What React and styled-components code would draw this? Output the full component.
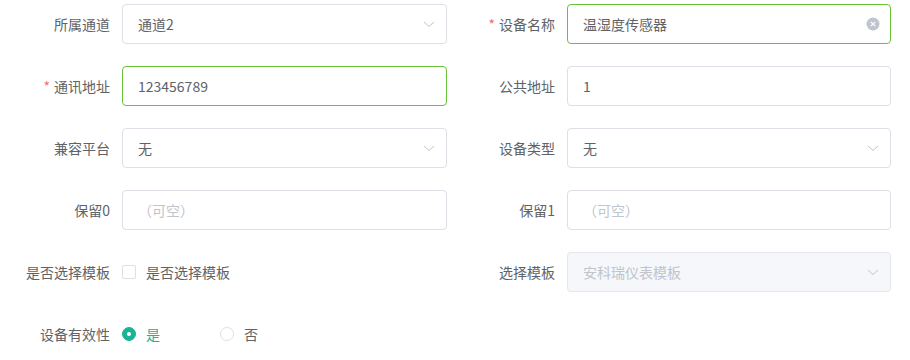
import React from 'react';
import styled, { createGlobalStyle } from 'styled-components';

const GlobalStyle = createGlobalStyle`
  body {
    margin: 0;
    background: #ffffff;
    font-family: "Noto Sans CJK SC", "Noto Sans", sans-serif;
  }
`;

const Form = styled.div`
  display: grid;
  grid-template-columns: 447px 444px;
  row-gap: 22px;
  padding-top: 4px;
`;

const Item = styled.div`
  display: flex;
  align-items: center;
  height: 40px;
`;

const Label = styled.label`
  width: ${p => p.$width || 122}px;
  box-sizing: border-box;
  padding-right: 12px;
  text-align: right;
  font-size: 14px;
  line-height: 40px;
  color: #606266;
  flex-shrink: 0;
`;

const Star = styled.span`
  color: #f56c6c;
  margin-right: 4px;
`;

const Field = styled.div`
  flex: 1;
  height: 40px;
  box-sizing: border-box;
  border: 1px solid ${p => (p.$valid ? '#67c23a' : p.$disabled ? '#e4e7ed' : '#dcdfe6')};
  background: ${p => (p.$disabled ? '#f5f7fa' : '#ffffff')};
  border-radius: 4px;
  display: flex;
  align-items: center;
  padding: 0 10px 0 15px;
  font-size: 14px;
  color: ${p => (p.$muted ? '#c0c4cc' : '#606266')};
`;

const Value = styled.span`
  flex: 1;
  color: ${p => (p.$placeholder ? '#c0c4cc' : 'inherit')};
`;

const Icon = styled.svg`
  flex-shrink: 0;
  margin-right: ${p => p.$mr ?? 1}px;
`;

const Control = styled.div`
  display: flex;
  align-items: center;
  font-size: 14px;
  color: #606266;
  gap: ${p => p.$gap || 0}px;
`;

const Box = styled.span`
  width: 14px;
  height: 14px;
  box-sizing: border-box;
  border: 1px solid #dcdfe6;
  border-radius: 2px;
  background: #fff;
`;

const Option = styled.span`
  display: flex;
  align-items: center;
  gap: 10px;
  color: ${p => (p.$checked ? '#1ab394' : '#606266')};
`;

const Dot = styled.span`
  width: 14px;
  height: 14px;
  box-sizing: border-box;
  border-radius: 50%;
  border: 1px solid ${p => (p.$checked ? '#1ab394' : '#dcdfe6')};
  background: ${p => (p.$checked ? '#1ab394' : '#fff')};
  display: flex;
  align-items: center;
  justify-content: center;
  &::after {
    content: '';
    width: 4px;
    height: 4px;
    border-radius: 50%;
    background: ${p => (p.$checked ? '#fff' : 'transparent')};
  }
`;

const Arrow = () => (
  <Icon width="12" height="14" viewBox="0 0 12 14" $mr={1}>
    <path d="M1 5 L6 9.5 L11 5" fill="none" stroke="#c0c4cc" strokeWidth="1" />
  </Icon>
);

const Clear = () => (
  <Icon width="14" height="14" viewBox="0 0 14 14" $mr={0}>
    <circle cx="7" cy="7" r="6.5" fill="#c0c4cc" />
    <path d="M4.8 4.8 L9.2 9.2 M9.2 4.8 L4.8 9.2" stroke="#fff" strokeWidth="1.2" />
  </Icon>
);

function FormLabel({ required, width, children }) {
  return (
    <Label $width={width}>
      {required && <Star>*</Star>}
      {children}
    </Label>
  );
}

export default function App() {
  return (
    <>
      <GlobalStyle />
      <Form>
        <Item>
          <FormLabel>所属通道</FormLabel>
          <Field>
            <Value>通道2</Value>
            <Arrow />
          </Field>
        </Item>
        <Item>
          <FormLabel required width={120}>设备名称</FormLabel>
          <Field $valid>
            <Value>温湿度传感器</Value>
            <Clear />
          </Field>
        </Item>

        <Item>
          <FormLabel required>通讯地址</FormLabel>
          <Field $valid>
            <Value>123456789</Value>
          </Field>
        </Item>
        <Item>
          <FormLabel width={120}>公共地址</FormLabel>
          <Field>
            <Value>1</Value>
          </Field>
        </Item>

        <Item>
          <FormLabel>兼容平台</FormLabel>
          <Field>
            <Value>无</Value>
            <Arrow />
          </Field>
        </Item>
        <Item>
          <FormLabel width={120}>设备类型</FormLabel>
          <Field>
            <Value>无</Value>
            <Arrow />
          </Field>
        </Item>

        <Item>
          <FormLabel>保留0</FormLabel>
          <Field>
            <Value $placeholder>（可空）</Value>
          </Field>
        </Item>
        <Item>
          <FormLabel width={120}>保留1</FormLabel>
          <Field>
            <Value $placeholder>（可空）</Value>
          </Field>
        </Item>

        <Item>
          <FormLabel>是否选择模板</FormLabel>
          <Control $gap={10}>
            <Box />
            <span>是否选择模板</span>
          </Control>
        </Item>
        <Item>
          <FormLabel width={120}>选择模板</FormLabel>
          <Field $disabled $muted>
            <Value>安科瑞仪表模板</Value>
            <Arrow />
          </Field>
        </Item>

        <Item>
          <FormLabel>设备有效性</FormLabel>
          <Control $gap={60}>
            <Option $checked>
              <Dot $checked />
              是
            </Option>
            <Option>
              <Dot />
              否
            </Option>
          </Control>
        </Item>
      </Form>
    </>
  );
}
